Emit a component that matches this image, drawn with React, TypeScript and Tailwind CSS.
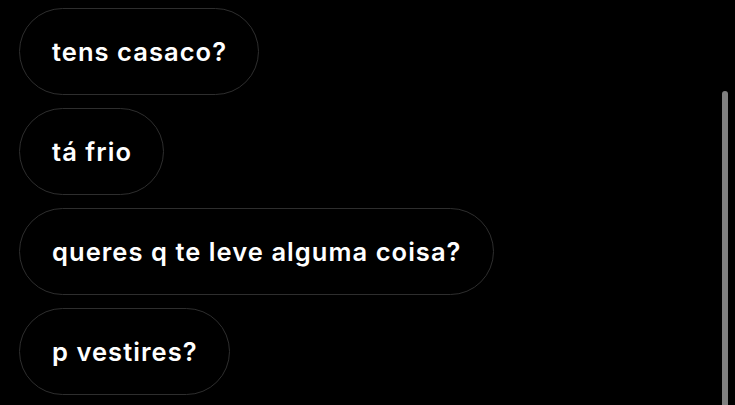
import React from "react";

const messages = [
  "tens casaco?",
  "tá frio",
  "queres q te leve alguma coisa?",
  "p vestires?",
];

export default function App() {
  return (
    <div
      className="relative w-[735px] h-[405px] overflow-hidden bg-black"
      style={{ fontFamily: "Inter, 'Noto Sans', sans-serif" }}
    >
      <div className="flex flex-col items-start gap-[13px] pl-[19px] pt-[8px]">
        {messages.map((m) => (
          <div
            key={m}
            className="flex h-[87px] items-center rounded-full border-[1.5px] border-[#2e2e2e] pl-[32px] pr-[31px] text-[25.5px] font-semibold leading-none tracking-[1.05px] text-white"
          >
            {m}
          </div>
        ))}
      </div>
      <div className="absolute right-[7px] top-[91px] bottom-0 w-[6px] rounded-t-full bg-[#808080]" />
    </div>
  );
}
